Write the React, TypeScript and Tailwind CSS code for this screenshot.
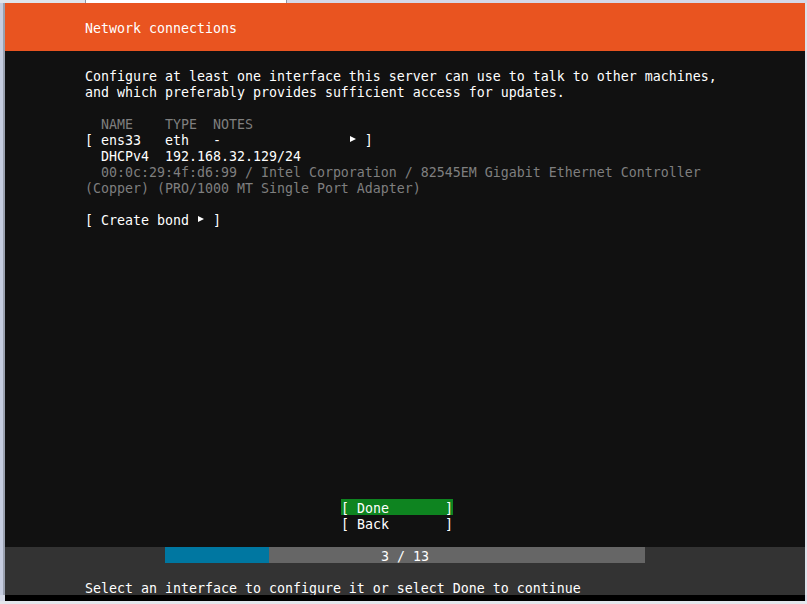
import React from 'react';

const mono = "font-['DejaVu_Sans_Mono','Liberation_Mono',monospace] text-[13.29px] leading-[20px]";

// small filled right triangle used by the installer menus
const Arrow: React.FC = () => (
  <span className="inline-block w-[8px] h-[16px] align-top">
    <svg width="8" height="16" viewBox="0 0 8 16" className="block">
      <polygon points="1,5 7,8 1,11" fill="currentColor" />
    </svg>
  </span>
);

const Row: React.FC<{ className?: string; children?: React.ReactNode }> = ({ className = '', children }) => (
  <div className={`h-[16px] whitespace-pre ${className}`}>{children}</div>
);

const App: React.FC = () => {
  const step = 3;
  const total = 13;
  // the console bar is 60 cells wide and fills whole cells only
  const filled = Math.floor((60 * step) / total) * 8;

  return (
    <div className={`w-[807px] h-[604px] bg-[#d5d9e6] flex flex-col overflow-hidden ${mono}`}>
      {/* host window tab strip */}
      <div className="h-[3px] flex">
        <div className="w-[85px] bg-[#dfe5ec]" />
        <div className="w-[1px] bg-[#8d97a5]" />
        <div className="w-[200px] bg-white" />
        <div className="w-[1px] bg-[#8d97a5]" />
        <div className="flex-1 bg-[#d5d8e8]" />
      </div>

      <div className="flex">
        <div className="w-[5px] flex">
          <div className="w-[3px] bg-[#c6cde0]" />
          <div className="w-[2px] bg-[#9aa1b0]" />
        </div>

        {/* console */}
        <div className="w-[800px] h-[592px] flex flex-col text-white">
          <header className="h-[48px] bg-[#e95420] pt-[16px] pl-[80px]">
            <Row>Network connections</Row>
          </header>

          <main className="flex-1 bg-[#111111] flex flex-col pl-[80px] pt-[16px]">
            <Row>Configure at least one interface this server can use to talk to other machines,</Row>
            <Row>and which preferably provides sufficient access for updates.</Row>
            <Row />
            <Row className="text-[#7f7f7f]">  NAME    TYPE  NOTES</Row>
            <Row>
              {'[ ens33   eth   -                '}
              <Arrow />
              {' ]'}
            </Row>
            <Row>  DHCPv4  192.168.32.129/24</Row>
            <Row className="text-[#7f7f7f]">  00:0c:29:4f:d6:99 / Intel Corporation / 82545EM Gigabit Ethernet Controller</Row>
            <Row className="text-[#7f7f7f]">(Copper) (PRO/1000 MT Single Port Adapter)</Row>
            <Row />
            <Row>
              {'[ Create bond '}
              <Arrow />
              {' ]'}
            </Row>

            <div className="mt-auto mb-[16px] ml-[256px] w-[112px] flex flex-col">
              <Row className="bg-[#0e8420]">{'[ Done       ]'}</Row>
              <Row>{'[ Back       ]'}</Row>
            </div>
          </main>

          <footer className="h-[48px] bg-[#333333] flex flex-col">
            <div className="h-[16px] ml-[160px] w-[480px] bg-[#666666] relative">
              <div className="h-full bg-[#0077a1]" style={{ width: `${filled}px` }} />
              <div className="absolute inset-0 h-[16px] text-center whitespace-pre">{`${step} / ${total}`}</div>
            </div>
            <Row />
            <Row className="pl-[80px]">Select an interface to configure it or select Done to continue</Row>
          </footer>
        </div>

        <div className="w-[2px] bg-[#dde1ea]" />
      </div>

      <div className="h-[6px] bg-black mx-[5px] mr-[2px]" />
      <div className="flex-1 bg-[#e4e6ec]" />
    </div>
  );
};

export default App;
